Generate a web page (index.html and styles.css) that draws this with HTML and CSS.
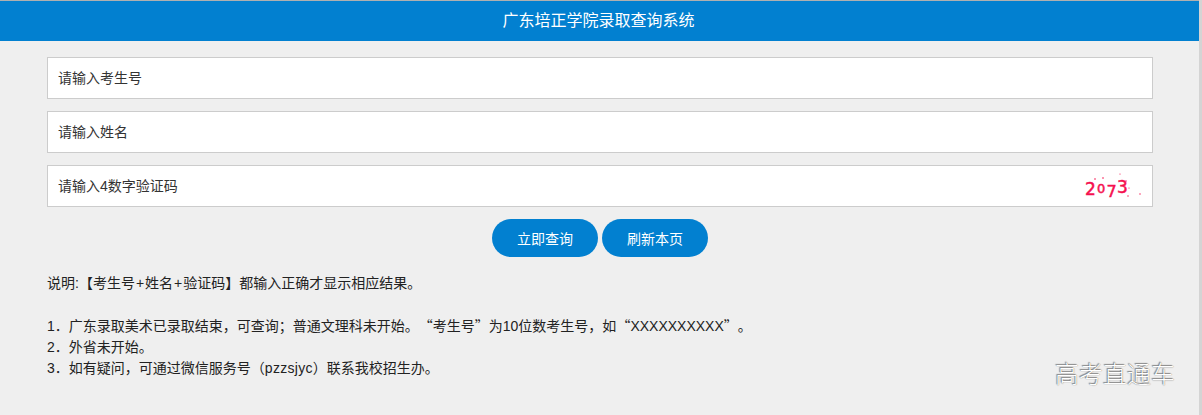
FILE: index.html
```
<!DOCTYPE html>
<html lang="zh">
<head>
<meta charset="utf-8">
<title>广东培正学院录取查询系统</title>
<link rel="stylesheet" href="styles.css">
</head>
<body>
<div class="page">
<header class="bar">广东培正学院录取查询系统</header>
<main class="content">
  <form class="form">
    <input class="field" type="text" placeholder="请输入考生号">
    <input class="field" type="text" placeholder="请输入姓名">
    <div class="captcha-row">
      <input class="field" type="text" placeholder="请输入4数字验证码">
      <svg class="captcha" width="60" height="30" viewBox="0 0 60 30">
        <text x="2" y="24" class="cap-digit cap-lg">2</text>
        <text x="14" y="22" class="cap-digit cap-sm">0</text>
        <text x="23.5" y="26" class="cap-digit cap-md">7</text>
        <text x="34" y="22" class="cap-digit cap-lg">3</text>
        <circle class="cap-dot" cx="12" cy="8" r="0.8"/>
        <circle class="cap-dot" cx="20" cy="7" r="0.8"/>
        <circle class="cap-dot" cx="37" cy="3" r="0.6"/>
        <circle class="cap-dot" cx="43" cy="10" r="0.7"/>
        <circle class="cap-dot" cx="46" cy="17" r="0.6"/>
        <circle class="cap-dot" cx="45" cy="25" r="0.7"/>
        <circle class="cap-dot" cx="57" cy="23" r="0.7"/>
      </svg>
    </div>
    <div class="actions">
      <button class="btn" type="button">立即查询</button>
      <button class="btn" type="button">刷新本页</button>
    </div>
  </form>
  <div class="notes">
    <p>说明:【考生号<span class="plus">+</span>姓名<span class="plus">+</span>验证码】都输入正确才显示相应结果。</p>
    <p class="gap">1．广东录取美术已录取结束，可查询；普通文理科未开始。<span class="cjk">“</span>考生号<span class="cjk">”</span>为10位数考生号，如<span class="cjk">“</span>XXXXXXXXXX<span class="cjk">”</span>。</p>
    <p>2．外省未开始。</p>
    <p>3．如有疑问，可通过微信服务号（<span class="latin">pzzsjyc</span>）联系我校招生办。</p>
  </div>
</main>
<div class="watermark">高考直通车</div>
</div>
</body>
</html>
```

FILE: styles.css
```
* { box-sizing: border-box; }
html, body { margin: 0; height: 100%; }
body {
  background: #efefef;
  color: #333;
  font-family: "Liberation Sans", "Noto Sans CJK SC", sans-serif;
  font-size: 14px;
  overflow: hidden;
  text-spacing-trim: space-all;
}
.page {
  position: relative;
  height: 100%;
  border-right: 3px solid #d4d4d4;
}
.bar {
  height: 41px;
  border-top: 1px solid #b0b0b0;
  background: #0280d0;
  color: #fff;
  font-size: 16px;
  line-height: 40px;
  text-align: center;
  padding-right: 2px;
}
.content { padding: 16px 46px 0 47px; }
.form { display: flex; flex-direction: column; gap: 12px; }
.field {
  display: block;
  width: 100%;
  height: 42px;
  padding: 0 10px;
  background: #fff;
  border: 1px solid #ccc;
  font: inherit;
  color: #333;
}
.field::placeholder { color: #333; opacity: 1; }
.captcha-row { position: relative; }
.captcha { position: absolute; right: 10px; top: 6px; }
.cap-digit {
  font-family: "DejaVu Sans", sans-serif;
  fill: #f5104f;
  stroke: #f5104f;
  stroke-width: 0.5;
}
.cap-lg { font-size: 17px; }
.cap-md { font-size: 16px; }
.cap-sm { font-size: 13px; }
.cap-dot { fill: #f5104f; }
.actions { display: flex; justify-content: center; gap: 4px; }
.btn {
  width: 106px;
  height: 38px;
  border: 0;
  border-radius: 19px;
  background: #0280d0;
  color: #fff;
  font: inherit;
}
.notes { margin-top: 16px; line-height: 21px; color: #222; }
.notes p { margin: 0; }
.notes .gap { margin-top: 21px; }
.cjk { font-family: "Noto Sans CJK SC", sans-serif; }
.plus { padding: 0 1px; }
.latin { letter-spacing: 0.3px; }
.watermark {
  position: absolute;
  right: 24px;
  top: 360px;
  font-size: 24px;
  font-weight: 300;
  line-height: 30px;
  color: #fff;
  text-shadow: 0 0 1px #555, -1px -1px 1px #888;
}
```
